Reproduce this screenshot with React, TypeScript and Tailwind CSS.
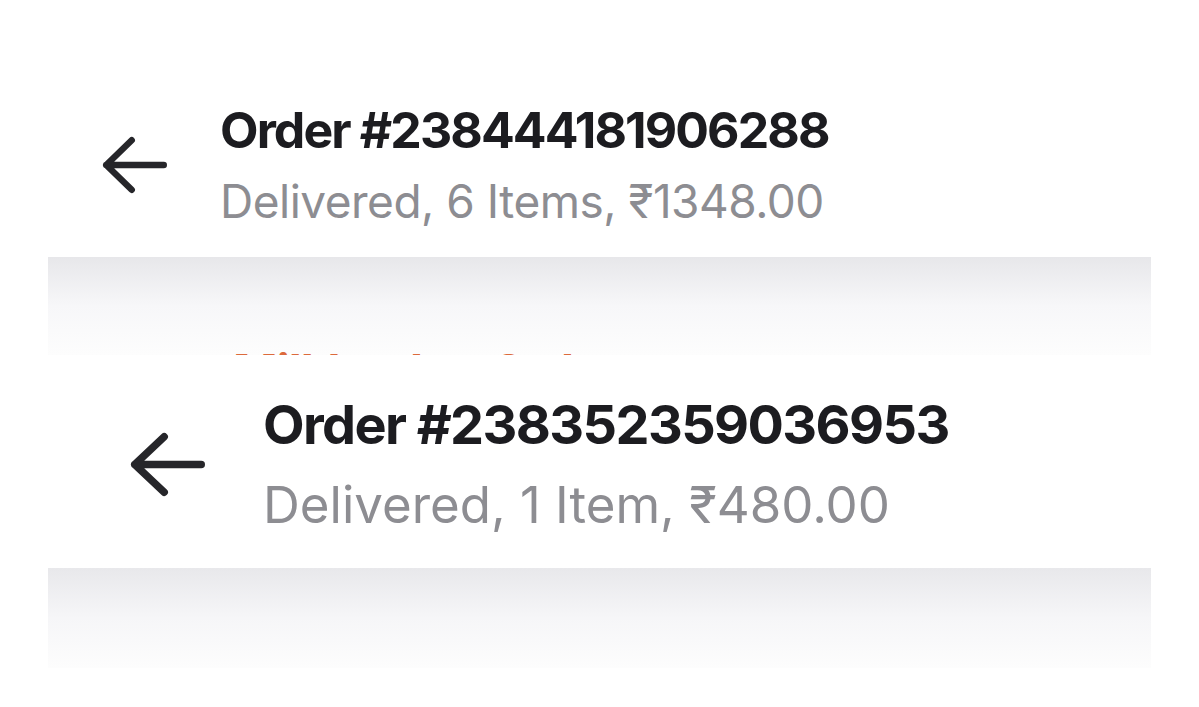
import React from 'react';

interface OrderHeaderProps {
  orderId: string;
  summary: string;
  arrow: { w: number; h: number; stroke: number };
  titleClass: string;
  summaryClass: string;
  gapClass: string;
}

const BackArrow: React.FC<{ w: number; h: number; stroke: number }> = ({ w, h, stroke }) => {
  const mid = h / 2;
  const arm = w * 0.45;
  return (
    <svg width={w} height={h} viewBox={`0 0 ${w} ${h}`} fill="none">
      <path
        d={`M${w - stroke / 2 - 1} ${mid}H${stroke / 2 + 1} M${arm} ${stroke / 2 + 1}L${stroke / 2 + 1} ${mid}L${arm} ${h - stroke / 2 - 1}`}
        stroke="#26262a"
        strokeWidth={stroke}
        strokeLinecap="round"
        strokeLinejoin="round"
      />
    </svg>
  );
};

const OrderHeader: React.FC<OrderHeaderProps> = ({
  orderId,
  summary,
  arrow,
  titleClass,
  summaryClass,
  gapClass,
}) => (
  <div className={`flex items-center ${gapClass}`}>
    <BackArrow {...arrow} />
    <div className="flex flex-col">
      <h1 className={`font-bold text-[#1c1c20] leading-none ${titleClass}`}>Order #{orderId}</h1>
      <p className={`text-[#8d8d92] leading-none ${summaryClass}`}>{summary}</p>
    </div>
  </div>
);

export default function App() {
  return (
    <div className="w-[1199px] h-[707px] bg-white overflow-hidden font-['Inter','Noto_Sans',sans-serif]">
      {/* first capture */}
      <section className="h-[257px] pt-[105px] pl-[102px]">
        <OrderHeader
          orderId="238444181906288"
          summary="Delivered, 6 Items, ₹1348.00"
          arrow={{ w: 66, h: 58, stroke: 6.5 }}
          titleClass="text-[50px] tracking-[-1.9px]"
          summaryClass="text-[46px] tracking-[-0.5px] mt-[23px]"
          gapClass="gap-[52px]"
        />
      </section>

      <div className="mx-[48px] h-[98px] overflow-hidden bg-gradient-to-b from-[#e7e7ea] via-[#f7f7f9] to-[#fdfdfd] flex flex-col justify-end">
        <div className="h-[7px] overflow-hidden pl-[185px]">
          <span className="block text-[48px] leading-[48px] font-bold text-[#dc6a3c] tracking-[-1px]">
            Milkbasket Order
          </span>
        </div>
      </div>

      {/* second capture */}
      <section className="h-[213px] pt-[43px] pl-[130px] bg-white">
        <OrderHeader
          orderId="238352359036953"
          summary="Delivered, 1 Item, ₹480.00"
          arrow={{ w: 76, h: 65, stroke: 7.5 }}
          titleClass="text-[54px] tracking-[-1.6px]"
          summaryClass="text-[51px] tracking-[0px] mt-[27px]"
          gapClass="gap-[57px]"
        />
      </section>

      <div className="mx-[48px] h-[100px] bg-gradient-to-b from-[#e8e8eb] via-[#f6f6f8] to-[#fdfdfd]" />
    </div>
  );
}
